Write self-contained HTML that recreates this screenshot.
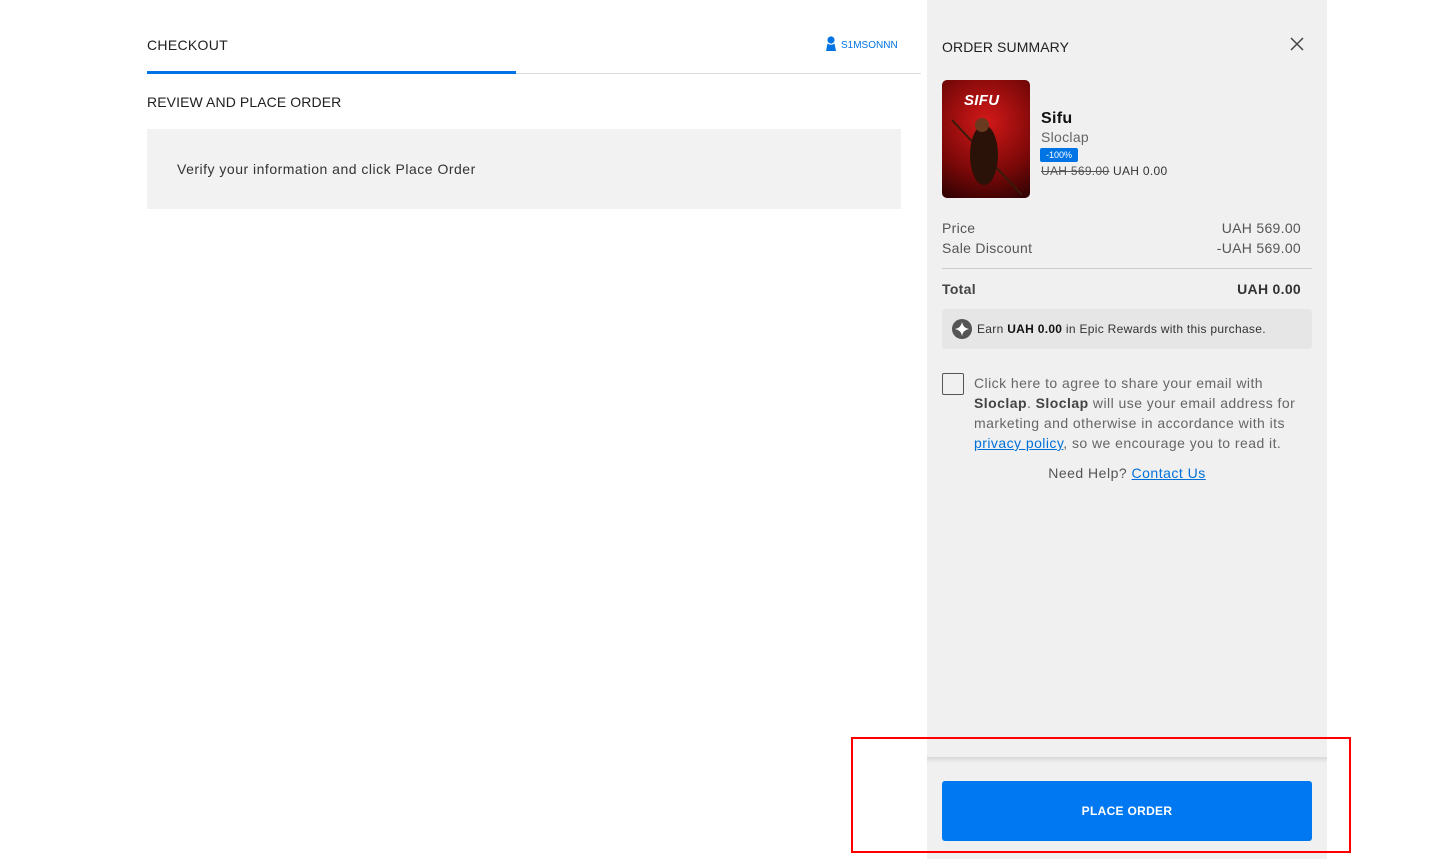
<!DOCTYPE html>
<html><head><meta charset="utf-8"><style>
*{margin:0;padding:0;box-sizing:border-box}
body{width:1449px;height:859px;background:#fff;font-family:"Liberation Sans",sans-serif;position:relative;overflow:hidden;color:#202020;letter-spacing:0.3px}
.abs{position:absolute}
.panel{left:927px;top:0;width:400px;height:859px;background:#f0f0f0}
.r{position:absolute;font-size:14px;color:#555}
a{color:#0070d8;text-decoration:underline}
</style></head><body>
<div class="abs" style="left:147px;top:37px;font-size:14px;color:#202020">CHECKOUT</div>
<div class="abs" style="left:825px;top:36px;"><svg width="12" height="15" viewBox="0 0 12 15"><circle cx="6" cy="4" r="3.6" fill="#0074e4"/><path d="M2.5 7.5 Q6 10 9.5 7.5 L11 15 H1 Z" fill="#0074e4"/></svg></div>
<div class="abs" style="left:841px;top:40px;font-size:10px;color:#0074e4;letter-spacing:0">S1MSONNN</div>
<div class="abs" style="left:147px;top:73px;width:774px;height:1px;background:#ddd"></div>
<div class="abs" style="left:147px;top:71px;width:369px;height:3px;background:#0074e4"></div>
<div class="abs" style="left:147px;top:94px;font-size:14px;letter-spacing:0.1px">REVIEW AND PLACE ORDER</div>
<div class="abs" style="left:147px;top:129px;width:754px;height:80px;background:#f2f2f2"></div>
<div class="abs" style="left:177px;top:161px;font-size:14px;color:#333;letter-spacing:0.5px">Verify your information and click Place Order</div>

<div class="abs panel"></div>
<div class="abs" style="left:942px;top:39px;font-size:14px;letter-spacing:0.1px">ORDER SUMMARY</div>
<svg class="abs" style="left:1290px;top:37px" width="14" height="14"><path d="M1 1L13 13M13 1L1 13" stroke="#444" stroke-width="1.5"/></svg>
<div class="abs" style="left:942px;top:80px;width:88px;height:118px;border-radius:5px;background:radial-gradient(circle at 50% 35%,#d41818,#7a0808 60%,#2a0202);overflow:hidden">
<div style="position:absolute;left:22px;top:12px;font-weight:bold;font-size:15px;color:#fff;font-style:italic">SIFU</div>
<svg style="position:absolute;left:0;top:0" width="88" height="118"><path d="M10 40 L80 115" stroke="#3a1a0a" stroke-width="2"/><ellipse cx="42" cy="75" rx="14" ry="30" fill="#2a1208"/><circle cx="40" cy="45" r="7" fill="#6a3a20"/></svg></div>
<div class="abs" style="left:1041px;top:110px;font-size:16px;font-weight:bold;color:#111">Sifu</div>
<div class="abs" style="left:1041px;top:129px;font-size:14px;color:#666">Sloclap</div>
<div class="abs" style="left:1040px;top:148px;width:38px;height:14px;background:#0074e4;border-radius:2px;color:#fff;font-size:9px;line-height:14px;text-align:center;letter-spacing:0">-100%</div>
<div class="abs" style="left:1041px;top:164px;font-size:12px;color:#333"><s style="color:#555">UAH 569.00</s> UAH 0.00</div>

<div class="r" style="left:942px;top:220px">Price</div>
<div class="r" style="right:148px;top:220px">UAH 569.00</div>
<div class="r" style="left:942px;top:240px">Sale Discount</div>
<div class="r" style="right:148px;top:240px">-UAH 569.00</div>
<div class="abs" style="left:942px;top:268px;width:370px;height:1px;background:#ccc"></div>
<div class="r" style="left:942px;top:281px;font-weight:bold;color:#444">Total</div>
<div class="r" style="right:148px;top:281px;font-weight:bold;color:#333">UAH 0.00</div>
<div class="abs" style="left:942px;top:309px;width:370px;height:40px;background:#e6e6e6;border-radius:3px"></div>
<svg class="abs" style="left:952px;top:319px" width="20" height="20"><circle cx="10" cy="10" r="10" fill="#555"/><path d="M10 3 Q11 9 17 10 Q11 11 10 17 Q9 11 3 10 Q9 9 10 3Z" fill="#fff"/></svg>
<div class="abs" style="left:977px;top:322px;font-size:12px;color:#333">Earn <b style="color:#111">UAH 0.00</b> in Epic Rewards with this purchase.</div>

<div class="abs" style="left:942px;top:373px;width:22px;height:22px;border:1.5px solid #555;border-radius:2px"></div>
<div class="abs" style="left:974px;top:373px;font-size:14px;line-height:20px;color:#666;letter-spacing:0.45px;white-space:nowrap">Click here to agree to share your email with<br><b style="color:#444">Sloclap</b>. <b style="color:#444">Sloclap</b> will use your email address for<br>marketing and otherwise in accordance with its<br><a>privacy policy</a>, so we encourage you to read it.</div>
<div class="abs" style="left:927px;top:465px;width:400px;text-align:center;font-size:14px;color:#555;letter-spacing:0.5px">Need Help? <a>Contact Us</a></div>

<div class="abs" style="left:927px;top:757px;width:400px;height:6px;background:linear-gradient(#d8d8d8,#f0f0f0)"></div>
<div class="abs" style="left:942px;top:781px;width:370px;height:60px;background:#0078f2;border-radius:3px;color:#fff;font-weight:bold;font-size:12px;line-height:60px;text-align:center">PLACE ORDER</div>
<div class="abs" style="left:851px;top:737px;width:500px;height:116px;border:2px solid #f00"></div>
</body></html>
